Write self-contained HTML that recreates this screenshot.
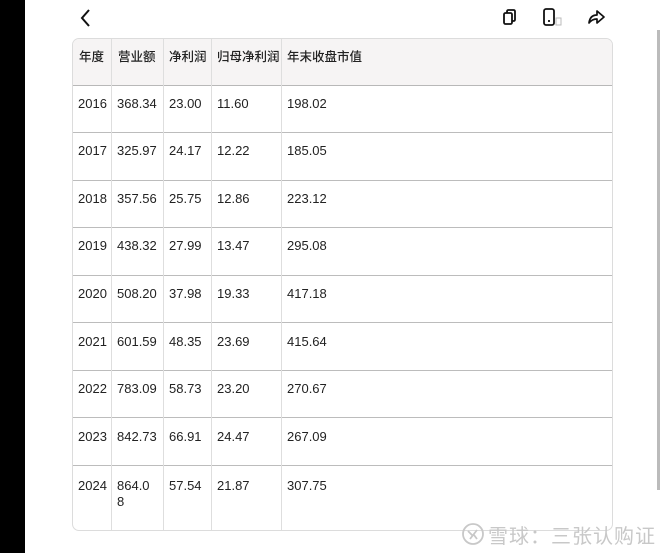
<!DOCTYPE html>
<html><head><meta charset="utf-8"><style>
*{margin:0;padding:0;box-sizing:border-box}
body{width:660px;height:553px;background:#fff;position:relative;overflow:hidden;font-family:"Liberation Sans","Noto Sans CJK SC",sans-serif;color:#222}
.black{position:absolute;left:0;top:0;width:25px;height:553px;background:#000}
.tbl{position:absolute;left:72px;top:38px;width:541px;height:493px;border:1px solid #dcdcdc;border-radius:7px;overflow:hidden}
.hdr{position:absolute;left:0;top:0;width:100%;height:47px;background:#f6f4f4;border-bottom:1.5px solid #b8b8b8}
.h{position:absolute;left:0;width:100%;height:1.2px;background:#bcbcbc}
.v{position:absolute;top:0;bottom:0;width:1px;background:#dedede}
.t{position:absolute;font-size:13px;line-height:16px;white-space:nowrap}
.th{font-weight:500;font-size:12.5px;font-family:"Noto Sans CJK SC",sans-serif}
.sb{position:absolute;left:657px;top:30px;width:3px;height:460px;background:#bbb}
.wm{position:absolute;left:460px;top:520px;font-size:20px;color:#c8c8c8;letter-spacing:1px;font-family:"Noto Sans CJK SC",sans-serif}
</style></head><body>
<div class="black"></div>
<svg style="position:absolute;left:78px;top:8px" width="16" height="20" viewBox="0 0 16 20"><path d="M11 2 L4 10 L11 18" fill="none" stroke="#111" stroke-width="2"/></svg>
<svg style="position:absolute;left:500px;top:7px" width="20" height="20" viewBox="0 0 20 20"><rect x="4" y="6" width="8" height="11" rx="1.5" fill="none" stroke="#111" stroke-width="1.8"/><path d="M7 6 V4.5 Q7 3 8.5 3 H13.5 Q15 3 15 4.5 V12.5 Q15 14 13.5 14 H12" fill="none" stroke="#111" stroke-width="1.8"/></svg>
<svg style="position:absolute;left:540px;top:7px" width="26" height="20" viewBox="0 0 26 20"><rect x="4" y="2" width="10" height="16" rx="2" fill="none" stroke="#111" stroke-width="1.8"/><path d="M8 14 H10" stroke="#111" stroke-width="1.8"/><rect x="16" y="11" width="5" height="7" fill="none" stroke="#bbb" stroke-width="1"/></svg>
<svg style="position:absolute;left:586px;top:8px" width="20" height="18" viewBox="0 0 20 18"><path d="M3 15 Q4 7 11 7 V3 L18 9 L11 15 V11 Q6 11 3 15 Z" fill="none" stroke="#111" stroke-width="1.7" stroke-linejoin="round"/></svg>
<div class="tbl">
<div class="hdr"></div>
<div class="h" style="top:93px"></div>
<div class="h" style="top:141px"></div>
<div class="h" style="top:188px"></div>
<div class="h" style="top:236px"></div>
<div class="h" style="top:283px"></div>
<div class="h" style="top:331px"></div>
<div class="h" style="top:378px"></div>
<div class="h" style="top:426px"></div>
<div class="v" style="left:38px"></div>
<div class="v" style="left:90px"></div>
<div class="v" style="left:138px"></div>
<div class="v" style="left:208px"></div>
<div class="t th" style="left:6px;top:9px">年度</div>
<div class="t th" style="left:45px;top:9px">营业额</div>
<div class="t th" style="left:96px;top:9px">净利润</div>
<div class="t th" style="left:144px;top:9px">归母净利润</div>
<div class="t th" style="left:214px;top:9px">年末收盘市值</div>
</div>
<div class="t" style="left:78px;top:96px">2016</div><div class="t" style="left:117px;top:96px">368.34</div><div class="t" style="left:169px;top:96px">23.00</div><div class="t" style="left:217px;top:96px">11.60</div><div class="t" style="left:287px;top:96px">198.02</div>
<div class="t" style="left:78px;top:143px">2017</div><div class="t" style="left:117px;top:143px">325.97</div><div class="t" style="left:169px;top:143px">24.17</div><div class="t" style="left:217px;top:143px">12.22</div><div class="t" style="left:287px;top:143px">185.05</div>
<div class="t" style="left:78px;top:191px">2018</div><div class="t" style="left:117px;top:191px">357.56</div><div class="t" style="left:169px;top:191px">25.75</div><div class="t" style="left:217px;top:191px">12.86</div><div class="t" style="left:287px;top:191px">223.12</div>
<div class="t" style="left:78px;top:238px">2019</div><div class="t" style="left:117px;top:238px">438.32</div><div class="t" style="left:169px;top:238px">27.99</div><div class="t" style="left:217px;top:238px">13.47</div><div class="t" style="left:287px;top:238px">295.08</div>
<div class="t" style="left:78px;top:286px">2020</div><div class="t" style="left:117px;top:286px">508.20</div><div class="t" style="left:169px;top:286px">37.98</div><div class="t" style="left:217px;top:286px">19.33</div><div class="t" style="left:287px;top:286px">417.18</div>
<div class="t" style="left:78px;top:334px">2021</div><div class="t" style="left:117px;top:334px">601.59</div><div class="t" style="left:169px;top:334px">48.35</div><div class="t" style="left:217px;top:334px">23.69</div><div class="t" style="left:287px;top:334px">415.64</div>
<div class="t" style="left:78px;top:381px">2022</div><div class="t" style="left:117px;top:381px">783.09</div><div class="t" style="left:169px;top:381px">58.73</div><div class="t" style="left:217px;top:381px">23.20</div><div class="t" style="left:287px;top:381px">270.67</div>
<div class="t" style="left:78px;top:429px">2023</div><div class="t" style="left:117px;top:429px">842.73</div><div class="t" style="left:169px;top:429px">66.91</div><div class="t" style="left:217px;top:429px">24.47</div><div class="t" style="left:287px;top:429px">267.09</div>
<div class="t" style="left:78px;top:478px">2024</div><div class="t" style="left:117px;top:478px">864.0<br>8</div><div class="t" style="left:169px;top:478px">57.54</div><div class="t" style="left:217px;top:478px">21.87</div><div class="t" style="left:287px;top:478px">307.75</div>
<div class="sb"></div>
<svg style="position:absolute;left:461px;top:522px" width="24" height="24" viewBox="0 0 24 24"><circle cx="12" cy="12" r="10" fill="none" stroke="#c8c8c8" stroke-width="1.8"/><path d="M7 9 L12 14 M16 8 L9 17 M13 13 L16 17" stroke="#c8c8c8" stroke-width="1.8" fill="none"/></svg>
<div class="wm" style="left:488px">雪球：三张认购证</div>
</body></html>
